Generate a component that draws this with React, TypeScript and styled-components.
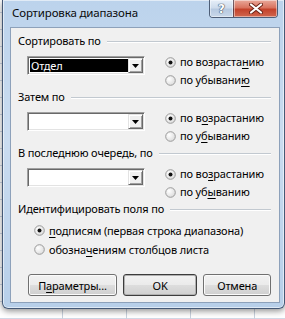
import React from 'react'
import styled, { createGlobalStyle } from 'styled-components'

const GlobalStyle = createGlobalStyle`
    html, body {
        margin: 0;
        padding: 0;
    }
    body {
        width: 285px;
        height: 319px;
        overflow: hidden;
        background-color: #ffffff;
        background-image:
            linear-gradient(to right, #c9d2de 1px, transparent 1px),
            linear-gradient(to bottom, #d0d7e5 1px, transparent 1px);
        background-size: 64px 100%, 100% 17px;
        background-position: 62px 0, 0 12px;
        font-family: 'Noto Sans', 'Open Sans', sans-serif;
        font-size: 11px;
        letter-spacing: -0.15px;
        color: #000;
    }
`

const Window = styled.div`
    box-sizing: border-box;
    margin-left: 2px;
    width: 283px;
    height: 309px;
    display: flex;
    flex-direction: column;
    padding: 0 4px 5px 7px;
    border: 1px solid rgba(38, 58, 88, 0.8);
    border-top: none;
    border-radius: 0 0 6px 6px;
    background: linear-gradient(to bottom, #bcd3ec 0%, #cadcf0 45%, #b7cfe9 100%);
    box-shadow: inset 0 0 0 1px rgba(255, 255, 255, 0.55), 0 2px 6px rgba(0, 0, 0, 0.45);
`

const TitleBar = styled.div`
    height: 27px;
    display: flex;
    align-items: flex-start;
`

const Title = styled.div`
    margin: 5px 0 0 2px;
    font-size: 11.5px;
    line-height: 16px;
    color: #0b0b0b;
`

const CaptionButtons = styled.div`
    margin-left: auto;
    margin-right: 2px;
    display: flex;
    height: 17px;
    border: 1px solid rgba(40, 55, 80, 0.75);
    border-top: none;
    border-radius: 0 0 4px 4px;
    overflow: hidden;
`

const CaptionButton = styled.div<{ $close?: boolean }>`
    width: ${({ $close }) => ($close ? 43 : 23)}px;
    display: flex;
    align-items: center;
    justify-content: center;
    background: ${({ $close }) =>
        $close
            ? 'linear-gradient(to bottom, #e9a99b 0%, #d9735f 45%, #c4422b 55%, #d0674f 100%)'
            : 'linear-gradient(to bottom, #e6eef8 0%, #cfdcec 45%, #b7c9e0 55%, #c9d8ea 100%)'};
    & + & {
        border-left: 1px solid rgba(40, 55, 80, 0.6);
    }
    box-shadow: inset 0 0 0 1px rgba(255, 255, 255, 0.45);
`

const HelpGlyph = styled.span`
    font-family: 'DejaVu Sans', sans-serif;
    font-weight: bold;
    font-size: 12px;
    line-height: 12px;
    color: #ffffff;
    text-shadow: 0 0 1px #3a4a60, 0 0 1px #3a4a60, 0 0 1px #3a4a60;
`

const Client = styled.div`
    flex: 1;
    box-sizing: border-box;
    display: flex;
    flex-direction: column;
    padding: 5px 8px 0 7px;
    background: #f0f0f0;
    border: 1px solid #8da1ba;
`

const Section = styled.div`
    display: flex;
    flex-direction: column;
`

const GroupHeader = styled.div`
    height: 16px;
    display: flex;
    align-items: center;
    line-height: 16px;
    white-space: nowrap;
`

const GroupLine = styled.div`
    flex: 1;
    margin-left: 6px;
    height: 1px;
    background: #c2c9d0;
    box-shadow: 0 1px 0 #ffffff;
`

const SectionBody = styled.div`
    margin-top: 4px;
    display: flex;
    align-items: flex-start;
`

const Combo = styled.div`
    margin: 3px 0 0 9px;
    box-sizing: border-box;
    width: 118px;
    height: 19px;
    display: flex;
    padding: 1px;
    border: 1px solid;
    border-color: #a0a0a0 #ffffff #ffffff #a0a0a0;
    box-shadow: inset 1px 1px 0 #696969, inset -1px -1px 0 #e3e3e3;
    background: #ffffff;
`

const ComboField = styled.div<{ $selected?: boolean }>`
    flex: 1;
    margin: 1px 0 1px 1px;
    padding-left: 1px;
    line-height: 13px;
    color: ${({ $selected }) => ($selected ? '#ffffff' : '#000000')};
    background: ${({ $selected }) => ($selected ? '#000000' : '#ffffff')};
`

const ComboArrow = styled.div`
    width: 15px;
    box-sizing: border-box;
    display: flex;
    align-items: center;
    justify-content: center;
    background: #f0f0f0;
    border: 1px solid;
    border-color: #e3e3e3 #696969 #696969 #e3e3e3;
    box-shadow: inset 1px 1px 0 #ffffff, inset -1px -1px 0 #a0a0a0;
`

const RadioList = styled.div<{ $indent: number; $row: number }>`
    margin-left: ${({ $indent }) => $indent}px;
    display: flex;
    flex-direction: column;
    & > * {
        height: ${({ $row }) => $row}px;
    }
`

const RadioRow = styled.label`
    display: flex;
    align-items: center;
    gap: 4px;
    white-space: nowrap;
    line-height: 16px;
`

const Key = styled.span`
    text-decoration: underline;
    text-underline-offset: 2px;
`

const ButtonRow = styled.div`
    margin: 15px 0 0 10px;
    display: flex;
    gap: 6px;
`

const Button = styled.div<{ $width: number; $default?: boolean }>`
    box-sizing: border-box;
    width: ${({ $width }) => $width}px;
    height: 22px;
    display: flex;
    align-items: center;
    justify-content: center;
    border: 1px solid ${({ $default }) => ($default ? '#3c3c3c' : '#707070')};
    border-radius: 3px;
    background: linear-gradient(to bottom, #f2f2f2 0%, #ebebeb 48%, #dddddd 52%, #cfcfcf 100%);
    box-shadow: inset 0 0 0 1px ${({ $default }) => ($default ? '#b0b0b0' : '#fbfbfb')};
`

const Radio = ({ checked }: { checked?: boolean }) => (
    <svg width="11" height="11" viewBox="0 0 11 11">
        <defs>
            <radialGradient id="rf" cx="0.35" cy="0.35" r="0.7">
                <stop offset="0" stopColor="#ffffff" />
                <stop offset="1" stopColor="#dcdcdc" />
            </radialGradient>
        </defs>
        <circle cx="5.5" cy="5.5" r="4.8" fill="url(#rf)" stroke="#9a9a9a" strokeWidth="1" />
        {checked && <circle cx="5.5" cy="5.5" r="2" fill="#111111" />}
    </svg>
)

const CloseGlyph = () => (
    <svg width="14" height="11" viewBox="0 0 14 11">
        <path d="M2 1.5 L12 9.5 M12 1.5 L2 9.5" stroke="#6b2418" strokeWidth="4" strokeLinecap="round" />
        <path d="M2 1.5 L12 9.5 M12 1.5 L2 9.5" stroke="#ffffff" strokeWidth="2.2" strokeLinecap="round" />
    </svg>
)

const Triangle = () => (
    <svg width="7" height="4" viewBox="0 0 7 4">
        <path d="M0 0 H7 L3.5 4 Z" fill="#000000" />
    </svg>
)

type SortSectionProps = {
    title: string
    value?: string
    asc: React.ReactNode
    desc: React.ReactNode
}

const SortSection = ({ title, value, asc, desc }: SortSectionProps) => (
    <Section>
        <GroupHeader>
            {title}
            <GroupLine />
        </GroupHeader>
        <SectionBody>
            <Combo>
                <ComboField $selected={!!value}>{value}</ComboField>
                <ComboArrow>
                    <Triangle />
                </ComboArrow>
            </Combo>
            <RadioList $indent={20} $row={18}>
                <RadioRow>
                    <Radio checked />
                    <span>{asc}</span>
                </RadioRow>
                <RadioRow>
                    <Radio />
                    <span>{desc}</span>
                </RadioRow>
            </RadioList>
        </SectionBody>
    </Section>
)

export default function App() {
    return (
        <>
            <GlobalStyle />
            <Window>
                <TitleBar>
                    <Title>Сортировка диапазона</Title>
                    <CaptionButtons>
                        <CaptionButton>
                            <HelpGlyph>?</HelpGlyph>
                        </CaptionButton>
                        <CaptionButton $close>
                            <CloseGlyph />
                        </CaptionButton>
                    </CaptionButtons>
                </TitleBar>
                <Client>
                    <SortSection
                        title="Сортировать по"
                        value="Отдел"
                        asc={<>по возраста<Key>н</Key>ию</>}
                        desc={<>по убывани<Key>ю</Key></>}
                    />
                    <SortSection
                        title="Затем по"
                        asc={<>по в<Key>о</Key>зрастанию</>}
                        desc={<>по у<Key>б</Key>ыванию</>}
                    />
                    <SortSection
                        title="В последнюю очередь, по"
                        asc={<>по во<Key>з</Key>растанию</>}
                        desc={<>по уб<Key>ы</Key>ванию</>}
                    />
                    <Section>
                        <GroupHeader>
                            Идентифицировать поля по
                            <GroupLine />
                        </GroupHeader>
                        <SectionBody>
                            <RadioList $indent={16} $row={19}>
                                <RadioRow>
                                    <Radio checked />
                                    <span>
                                        <Key>п</Key>одписям (первая строка диапазона)
                                    </span>
                                </RadioRow>
                                <RadioRow>
                                    <Radio />
                                    <span>
                                        обозна<Key>ч</Key>ениям столбцов листа
                                    </span>
                                </RadioRow>
                            </RadioList>
                        </SectionBody>
                    </Section>
                    <ButtonRow>
                        <Button $width={92}>
                            <span>
                                П<Key>а</Key>раметры...
                            </span>
                        </Button>
                        <Button $width={77} $default>
                            OK
                        </Button>
                        <Button $width={70}>Отмена</Button>
                    </ButtonRow>
                </Client>
            </Window>
        </>
    )
}
